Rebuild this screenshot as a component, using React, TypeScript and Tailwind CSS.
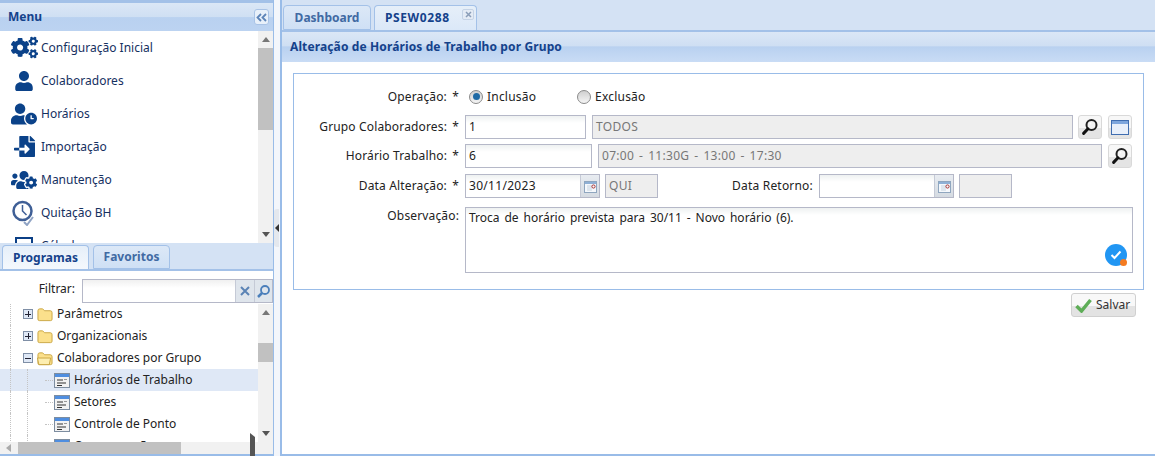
import { FaCogs, FaFileImport, FaUser, FaUserClock, FaUsersCog } from 'react-icons/fa';

const font = "font-['Noto_Sans','Liberation_Sans',sans-serif]";

function Magnifier({ size = 18 }: { size?: number }) {
  return (
    <svg width={size} height={size} viewBox="0 0 18 18">
      <circle cx="10.5" cy="7" r="5" fill="#f4f4f4" stroke="#222" strokeWidth="2" />
      <path d="M7 10.8 2.6 15.4" stroke="#111" strokeWidth="3" strokeLinecap="round" />
      <circle cx="9.5" cy="5.5" r="1" fill="#fff" />
    </svg>
  );
}

function CalendarIcon() {
  return (
    <svg width="13" height="13" viewBox="0 0 13 13">
      <rect x="0.5" y="1.5" width="12" height="11" fill="#f5f8fc" stroke="#8fa6bf" />
      <rect x="1" y="2" width="11" height="2" fill="#8fb0d6" />
      <path d="M3 6h5M3 8h5M3 10h5" stroke="#c6d3e0" />
      <circle cx="9.5" cy="6.5" r="1.6" fill="none" stroke="#a33" />
    </svg>
  );
}

function TreeDoc() {
  return (
    <svg width="17" height="17" viewBox="0 0 17 17" className="shrink-0">
      <rect x="0.5" y="1.5" width="15" height="14" fill="#f2f2f2" stroke="#7d8da0" />
      <rect x="1" y="2" width="14" height="3" fill="#4f8ee0" />
      <path d="M3 8h6M3 11h9M3 13.5h5" stroke="#333" />
      <path d="M10 7.5h3" stroke="#999" />
    </svg>
  );
}

function Folder({ open }: { open?: boolean }) {
  return (
    <svg width="16" height="15" viewBox="0 0 17 15" className="shrink-0">
      <path d="M1 3.5Q1 1.5 3 1.5h3l2 2h6q2 0 2 2v7q0 1.500-1.500 1.500h-12Q1 14 1 12.500Z" fill="#fbe08c" stroke="#c9a441" />
      {open && <path d="M0.500 7h14l-1.500 7H2Z" fill="#fdeeb0" stroke="#c9a441" />}
    </svg>
  );
}

function Expander({ open }: { open?: boolean }) {
  return (
    <span className="relative flex h-[10px] w-[10px] shrink-0 items-center justify-center border border-[#7f8fa6] bg-[#dfe8f6]">
      <span className="h-px w-[6px] bg-[#223]" />
      {!open && <span className="absolute h-[6px] w-px bg-[#223]" />}
    </span>
  );
}

function ScrollArrow({ dir }: { dir: 'up' | 'down' | 'left' | 'right' }) {
  const cls = {
    up: 'border-x-[4px] border-b-[5px] border-x-transparent border-b-[#777]',
    down: 'border-x-[4px] border-t-[5px] border-x-transparent border-t-[#555]',
    left: 'border-y-[4px] border-r-[5px] border-y-transparent border-r-[#aaa]',
    right: 'border-y-[4px] border-l-[5px] border-y-transparent border-l-[#555]',
  }[dir];
  return <span className={`h-0 w-0 ${cls}`} />;
}

function VScroll({ top, thumb, className }: { top: number; thumb: number; className: string }) {
  return (
    <div className={`relative flex w-[15px] shrink-0 flex-col items-center justify-between bg-[#f1f1f1] py-[6px] ${className}`}>
      <ScrollArrow dir="up" />
      <div className="absolute left-0 w-full bg-[#c1c1c1]" style={{ top, height: thumb }} />
      <ScrollArrow dir="down" />
    </div>
  );
}

const menuItems = [
  { label: 'Configuração Inicial', icon: <FaCogs size={27} /> },
  { label: 'Colaboradores', icon: <FaUser size={20} /> },
  { label: 'Horários', icon: <FaUserClock size={26} /> },
  { label: 'Importação', icon: <FaFileImport size={21} /> },
  { label: 'Manutenção', icon: <FaUsersCog size={26} /> },
  {
    label: 'Quitação BH',
    icon: (
      <svg width="26" height="26" viewBox="0 0 26 26" fill="none" stroke="#3f5f96">
        <circle cx="11.500" cy="11" r="9" strokeWidth="2.500" />
        <path d="M11.500 5v6l4 4" strokeWidth="1.500" />
        <path d="M13 22l3 3 6-8" stroke="#8fa3c4" strokeWidth="2" />
      </svg>
    ),
  },
  {
    label: 'Cálculo',
    icon: (
      <svg width="20" height="20" viewBox="0 0 20 20" fill="none" stroke="#0b3f86" strokeWidth="2">
        <rect x="2" y="2" width="16" height="14" />
      </svg>
    ),
  },
];

function Sidebar() {
  return (
    <div className="flex h-full w-[274px] shrink-0 flex-col border-r border-b-2 border-[#99bce8]">
      <div className="h-[3px] shrink-0 bg-[#a3c1e8]" />
      <div className="flex h-[28px] shrink-0 items-center justify-between bg-[linear-gradient(#dbe7f6,#cfdff3_50%,#b9d1f0_52%,#bcd3f1)] pl-2 pr-[4px]">
        <span className="text-[12px] font-bold text-[#15428b]">Menu</span>
        <span className="flex h-[16px] w-[15px] items-center justify-center rounded-[3px] border border-[#a9c3e6] bg-[#e8f0fa] text-[#5d84b8]">
          <svg width="11" height="9" viewBox="0 0 11 9" fill="none" stroke="currentColor" strokeWidth="1.800">
            <path d="M5 1 1.500 4.500 5 8M10 1 6.500 4.500 10 8" />
          </svg>
        </span>
      </div>
      <div className="flex h-[212px] shrink-0 overflow-hidden bg-white">
        <div className="min-w-0 flex-1 overflow-hidden">
          {menuItems.map((item) => (
            <div key={item.label} className="flex h-[33px] items-center">
              <span className="flex w-[41px] shrink-0 items-center justify-center pl-[7px] text-[#0b4289]">{item.icon}</span>
              <span className="text-[12px] text-[#15305f]">{item.label}</span>
            </div>
          ))}
        </div>
        <VScroll top={17} thumb={82} className="h-full" />
      </div>
      <div className="flex h-[28px] shrink-0 items-end gap-[4px] border-b-[2px] border-[#a3c1e8] bg-[#d4e2f4] pl-[2px]">
        <div className="flex h-[24px] w-[87px] items-center justify-center rounded-t-[4px] border border-b-0 border-[#a3c1e8] bg-[linear-gradient(#e6eff9,#f4f8fd)] text-[12px] font-bold text-[#15428b]">
          Programas
        </div>
        <div className="flex h-[24px] w-[77px] items-center justify-center rounded-t-[4px] border border-[#a3c1e8] bg-[linear-gradient(#dce8f7,#cfe0f5)] text-[12px] font-bold text-[#416aa3]">
          Favoritos
        </div>
      </div>
      <div className="flex h-[33px] shrink-0 items-start bg-white pt-[8px]">
        <span className="w-[76px] pr-[1px] text-right text-[12px] leading-[20px] text-[#222]">Filtrar:</span>
        <div className="ml-[6px] flex h-[24px] flex-1 border border-[#b5b8c8] bg-[linear-gradient(#f0f0f0,#fff_8px)]">
          <div className="flex-1" />
          <span className="flex w-[19px] items-center justify-center border-l border-[#c5cad6] bg-[#dfe5ec] text-[#5a83b5]">
            <svg width="10" height="10" viewBox="0 0 10 10" stroke="currentColor" strokeWidth="2">
              <path d="M1 1l8 8M9 1 1 9" />
            </svg>
          </span>
          <span className="flex w-[18px] items-center justify-center border-l border-[#c5cad6] bg-[#dfe5ec]">
            <svg width="15" height="15" viewBox="0 0 15 15" fill="none" stroke="#4b7fbb">
              <circle cx="9" cy="6" r="4" strokeWidth="1.800" />
              <path d="M6 9 2 13" strokeWidth="2.500" />
            </svg>
          </span>
        </div>
      </div>
      <div className="flex min-h-0 flex-1 flex-col bg-white">
        <div className="flex min-h-0 flex-1">
          <div className="min-w-0 flex-1 overflow-hidden">
            <div className="-mt-[1px]">
              <FolderRow label="Parâmetros" />
              <FolderRow label="Organizacionais" />
              <FolderRow label="Colaboradores por Grupo" open />
              <LeafRow label="Horários de Trabalho" selected />
              <LeafRow label="Setores" />
              <LeafRow label="Controle de Ponto" />
              <LeafRow label="Compensações" />
            </div>
          </div>
          <VScroll top={39} thumb={19} className="" />
        </div>
        <div className="relative flex h-[12px] shrink-0 items-center justify-between bg-[#f1f1f1] px-[6px]">
          <ScrollArrow dir="left" />
          <div className="absolute top-0 left-[18px] h-full w-[163px] bg-[#c1c1c1]" />
          <div className="mr-[12px]">
            <ScrollArrow dir="right" />
          </div>
        </div>
      </div>
    </div>
  );
}

function Guide({ width }: { width: number }) {
  return (
    <span className="h-full shrink-0" style={{ width }}>
      <span className="block h-full w-0 border-l border-dotted border-[#c4c4c4]" />
    </span>
  );
}

function FolderRow({ label, open }: { label: string; open?: boolean }) {
  return (
    <div className="flex h-[22px] items-center pl-[10px]">
      <Guide width={13} />
      <Expander open={open} />
      <span className="ml-[4px] mr-[4px]">
        <Folder open={open} />
      </span>
      <span className="whitespace-nowrap text-[12px] text-[#222]">{label}</span>
    </div>
  );
}

function LeafRow({ label, selected }: { label: string; selected?: boolean }) {
  return (
    <div className={`flex h-[22px] items-center pl-[10px] ${selected ? 'bg-[#dfe8f6]' : ''}`}>
      <Guide width={17} />
      <Guide width={18} />
      <span className="mr-[1px] w-[8px] border-t border-dotted border-[#c4c4c4]" />
      <TreeDoc />
      <span className="ml-[3px] whitespace-nowrap text-[12px] text-[#222]">{label}</span>
    </div>
  );
}

function Splitter() {
  return (
    <div className="flex h-full w-[6px] shrink-0 items-center bg-[#f3f6fb]">
      <div className="flex h-[38px] w-[5px] items-center justify-center rounded-l-[3px] bg-[#e4e8ee]">
        <span className="h-0 w-0 border-y-[4px] border-r-[4px] border-y-transparent border-r-[#333]" />
      </div>
    </div>
  );
}

function Field({ width, value, disabled, className = '' }: { width: number | string; value?: string; disabled?: boolean; className?: string }) {
  return (
    <div
      className={`flex h-[24px] shrink-0 items-center border border-[#b5b8c8] px-[3px] text-[12px] tracking-[0.3px] [word-spacing:1.5px] ${
        disabled ? 'bg-[#eeeeee] text-[#777]' : 'bg-[linear-gradient(#eef1f1,#fff_7px)] text-[#222]'
      } ${className}`}
      style={{ width }}
    >
      {value}
    </div>
  );
}

function DateField({ width, value }: { width: number; value?: string }) {
  return (
    <div className="flex h-[24px] shrink-0 border border-[#b5b8c8]" style={{ width }}>
      <div className="flex flex-1 items-center bg-[linear-gradient(#eef1f1,#fff_7px)] px-[3px] text-[12px] tracking-[0.3px] text-[#222]">{value}</div>
      <span className="flex w-[19px] items-center justify-center border-l border-[#c5cad6] bg-[linear-gradient(#e8ecf1,#d5dbe2)]">
        <CalendarIcon />
      </span>
    </div>
  );
}

function IconButton({ children }: { children: React.ReactNode }) {
  return (
    <span className="flex h-[24px] w-[24px] shrink-0 items-center justify-center rounded-[3px] border border-[#d9d9d9] bg-[linear-gradient(#f7f7f7_55%,#e4e4e4_56%)]">
      {children}
    </span>
  );
}

function Label({ text, required }: { text: string; required?: boolean }) {
  return (
    <span className="flex w-[166px] shrink-0 justify-end pr-[1px] text-[12px] tracking-[0.15px] whitespace-nowrap text-[#222]">
      {text}
      {required && <span className="w-[12px] text-right">*</span>}
    </span>
  );
}

function Radio({ checked, label, className = '' }: { checked?: boolean; label: string; className?: string }) {
  return (
    <span className={`flex items-center gap-[4px] text-[12px] tracking-[0.2px] text-[#222] ${className}`}>
      <span className="flex h-[14px] w-[14px] items-center justify-center rounded-full border border-[#8a8a8a] bg-[linear-gradient(#cfcfcf,#f5f5f5)]">
        {checked && <span className="h-[7px] w-[7px] rounded-full bg-[#1f6aa5]" />}
      </span>
      {label}
    </span>
  );
}

function Content() {
  return (
    <div className="flex h-full min-w-0 flex-1 flex-col border-b-2 border-l-[2px] border-[#99bce8]">
      <div className="flex h-[30px] shrink-0 items-end gap-[3px] bg-[#d4e2f4] pl-[1px]">
        <div className="flex h-[25px] w-[88px] items-center justify-center rounded-t-[4px] border border-[#a3c1e8] bg-[linear-gradient(#dce8f7,#cfe0f5)] text-[12px] font-bold text-[#416aa3]">
          Dashboard
        </div>
        <div className="relative flex h-[25px] w-[103px] items-center rounded-t-[4px] border border-b-0 border-[#a3c1e8] bg-[linear-gradient(#e6eff9,#dbe8f8)] pl-[10px] text-[12px] font-bold tracking-[0.6px] text-[#15428b]">
          PSEW0288
          <span className="absolute top-[3px] right-[2px] flex h-[11px] w-[12px] items-center justify-center rounded-[2px] border border-[#c5d3e6] bg-[#e4ebf5] text-[#8a9db8]">
            <svg width="7" height="7" viewBox="0 0 7 7" stroke="currentColor" strokeWidth="1.500">
              <path d="M1 1l5 5M6 1 1 6" />
            </svg>
          </span>
        </div>
      </div>
      <div className="h-[2px] shrink-0 bg-[#a3c1e8]" />
      <div className="flex h-[30px] shrink-0 items-center bg-[linear-gradient(#dbe7f6,#cfdff3_45%,#b9d1f0_50%,#c9dcf5)] pl-[8px] text-[12px] font-bold tracking-[0.12px] text-[#15428b]">
        Alteração de Horários de Trabalho por Grupo
      </div>
      <div className="min-h-0 flex-1 bg-white pt-[11px] pl-[11px]">
        <div className="flex h-[217px] w-[851px] flex-col border border-[#99bce8]">
          <div className="flex h-[41px] shrink-0 items-center pt-[4px]">
            <Label text="Operação:" required />
            <Radio checked label="Inclusão" className="ml-[9px]" />
            <Radio label="Exclusão" className="ml-[41px]" />
          </div>
          <div className="flex h-[24px] shrink-0 items-center">
            <Label text="Grupo Colaboradores:" required />
            <Field width={121} value="1" className="ml-[5px]" />
            <Field width={481} value="TODOS" disabled className="ml-[6px]" />
            <span className="ml-[5px]"><IconButton><Magnifier /></IconButton></span>
            <span className="ml-[6px]">
              <IconButton>
                <svg width="18" height="15" viewBox="0 0 18 15">
                  <rect x="0.500" y="0.500" width="17" height="14" fill="#e8effa" stroke="#3f6db0" />
                  <rect x="1" y="1" width="16" height="3" fill="#7ea6dd" />
                </svg>
              </IconButton>
            </span>
          </div>
          <div className="mt-[5px] flex h-[24px] shrink-0 items-center">
            <Label text="Horário Trabalho:" required />
            <Field width={127} value="6" className="ml-[5px]" />
            <Field width={504} value="07:00 - 11:30G - 13:00 - 17:30" disabled className="ml-[6px]" />
            <span className="ml-[6px]"><IconButton><Magnifier /></IconButton></span>
          </div>
          <div className="mt-[6px] flex h-[24px] shrink-0 items-center">
            <Label text="Data Alteração:" required />
            <span className="ml-[5px]"><DateField width={135} value="30/11/2023" /></span>
            <Field width={53} value="QUI" disabled className="ml-[5px]" />
            <span className="w-[161px] shrink-0 pr-[6px] text-right text-[12px] tracking-[0.2px] text-[#222]">Data Retorno:</span>
            <DateField width={135} />
            <Field width={53} disabled className="ml-[5px]" />
          </div>
          <div className="mt-[9px] flex shrink-0 items-start">
            <Label text="Observação:" />
            <div className="relative ml-[5px] h-[66px] w-[668px] border border-[#b5b8c8] bg-[linear-gradient(#eef1f1,#fff_7px)] px-[3px] pt-[1px] text-[12px] text-[#222] [word-spacing:1.8px]">
              Troca de horário prevista para 30/11 - Novo horário (6).
              <span className="absolute right-[5px] bottom-[6px] flex h-[22px] w-[22px] items-center justify-center rounded-full bg-[#2196f3]">
                <svg width="12" height="10" viewBox="0 0 12 10" fill="none" stroke="#fff" strokeWidth="2">
                  <path d="M1.500 5l3 3 6-6.500" />
                </svg>
                <span className="absolute right-0 bottom-0 h-[7px] w-[7px] rounded-full bg-[#f47b20]" />
              </span>
            </div>
          </div>
        </div>
        <div className="mt-[3px] flex w-[843px] justify-end">
          <div className="flex h-[24px] w-[65px] items-center gap-[4px] rounded-[3px] border border-[#d0d0d0] bg-[linear-gradient(#f8f8f8_55%,#e3e3e3_56%)] pl-[3px] text-[12px] text-[#333]">
            <svg width="17" height="15" viewBox="0 0 17 15" fill="none">
              <path d="M1.500 8l5 5 9-11" stroke="#5ead57" strokeWidth="3.500" />
            </svg>
            Salvar
          </div>
        </div>
      </div>
    </div>
  );
}

export default function App() {
  return (
    <div className={`flex h-[456px] w-[1155px] overflow-hidden bg-white ${font}`}>
      <Sidebar />
      <Splitter />
      <Content />
    </div>
  );
}
